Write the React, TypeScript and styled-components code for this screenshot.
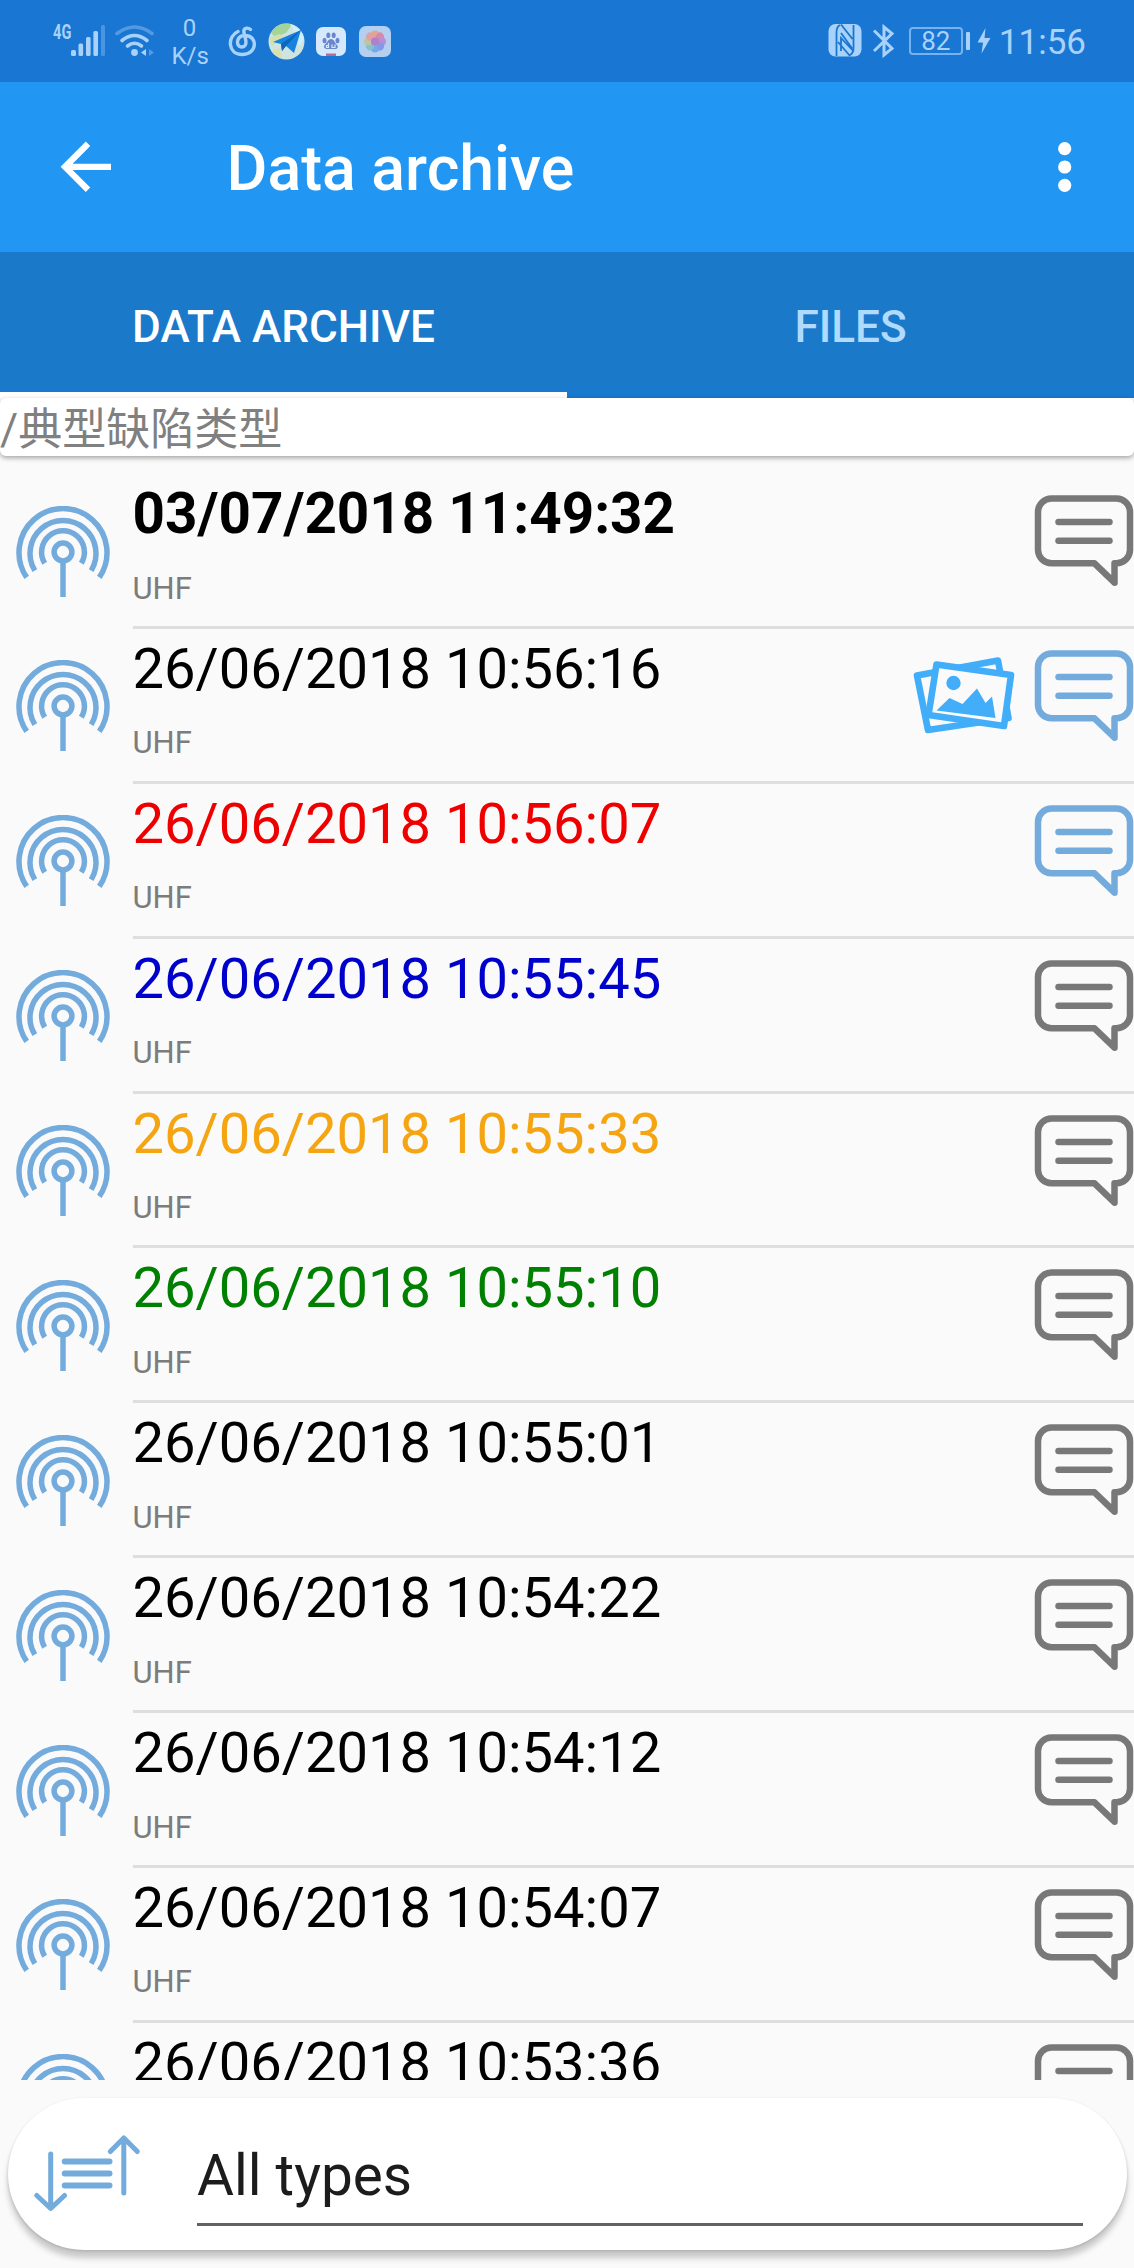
import React, { useState } from 'react'
import styled, { createGlobalStyle } from 'styled-components'

const GlobalStyle = createGlobalStyle`
  * {
    box-sizing: border-box;
  }
  body {
    margin: 0;
    background: #fafafa;
    font-family: Roboto, 'Noto Sans CJK SC', sans-serif;
  }
  svg {
    display: block;
    flex: none;
  }
`

const Screen = styled.div`
  width: 1134px;
  height: 2268px;
  display: flex;
  flex-direction: column;
  overflow: hidden;
  background: #fafafa;
`

const StatusBar = styled.div`
  height: 82px;
  flex: none;
  display: flex;
  justify-content: space-between;
  padding: 0 48px 0 53px;
  background: #1976d2;
  color: #a9d2fb;
`

const StatusGroup = styled.div`
  display: flex;
  align-items: flex-start;
`

const StatusItem = styled.div<{ $left?: number; $top: number }>`
  margin-left: ${({ $left }) => $left || 0}px;
  margin-top: ${({ $top }) => $top}px;
`

const Network = styled.span`
  display: block;
  width: 18px;
  font-size: 20px;
  line-height: 20px;
  font-weight: 700;
  transform: scaleX(0.73);
  transform-origin: left;
`

const Speed = styled.div`
  width: 36px;
  font-size: 24px;
  line-height: 27.5px;
  text-align: center;
`

const Battery = styled.div`
  width: 54px;
  height: 28px;
  border: 2px solid #75b3f0;
  border-radius: 4px;
  font-size: 26px;
  line-height: 25px;
  text-align: center;
`

const BatteryTip = styled.div`
  width: 4px;
  height: 18px;
  border-radius: 1px;
  background: #a9d2fb;
`

const Clock = styled.div`
  font-size: 35px;
  line-height: 40px;
`

const Toolbar = styled.header`
  height: 170px;
  flex: none;
  display: flex;
  align-items: center;
  padding: 0 31px 0 48px;
  background: #2196f3;
  color: #fff;
`

const Title = styled.h1`
  flex: 1;
  margin: 4px 0 0 103px;
  font-size: 62.6px;
  line-height: 72px;
  font-weight: 500;
`

const IconButton = styled.button`
  padding: 0;
  border: none;
  background: none;
  color: inherit;
  cursor: pointer;
`

const Tabs = styled.nav`
  height: 146px;
  flex: none;
  display: flex;
  background: linear-gradient(#1b79ca 0, #1b79ca 133px, #1779d0 140px, #1b79ca 146px);
`

const Tab = styled.button<{ $active: boolean }>`
  flex: 1;
  padding: 9px 0 0;
  border: none;
  border-bottom: 6px solid ${({ $active }) => ($active ? '#fff' : 'transparent')};
  background: none;
  color: ${({ $active }) => ($active ? '#fff' : '#b1daff')};
  font-family: inherit;
  font-size: 44.1px;
  line-height: 52px;
  font-weight: 500;
  cursor: pointer;
`

const PathCard = styled.div`
  height: 58px;
  flex: none;
  padding-top: 3px;
  border-radius: 6px;
  background: #fff;
  box-shadow: 0 2px 5px rgba(0, 0, 0, 0.35);
  color: #808080;
  font-size: 44px;
  line-height: 58px;
  white-space: nowrap;
`

const List = styled.div`
  height: 1623.7px;
  flex: none;
  padding-top: 18px;
  overflow: hidden;
`

const Row = styled.div`
  height: 154.88px;
  display: flex;
  padding-left: 16px;
`

const AntennaSlot = styled.div`
  width: 116.5px;
  flex: none;
  padding-top: 31.6px;
`

const RowBody = styled.div`
  flex: 1;
  display: flex;
  justify-content: space-between;
  border-bottom: 3px solid #dedede;
`

const Stamp = styled.div<{ $color?: string; $bold?: boolean }>`
  margin-top: 7px;
  color: ${({ $color }) => $color || '#000'};
  font-size: ${({ $bold }) => ($bold ? 56.6 : 56.1)}px;
  line-height: 66px;
  font-weight: ${({ $bold }) => ($bold ? 700 : 400)};
  white-space: nowrap;
`

const Kind = styled.div`
  margin-top: 22.5px;
  color: #7c7c7c;
  font-size: 31px;
  line-height: 37px;
`

const RowIcons = styled.div`
  display: flex;
  gap: 18px;
  padding-top: 20px;
`

const FilterCard = styled.div`
  height: 152px;
  flex: none;
  display: flex;
  margin: 18.3px 7px 0 8px;
  padding: 36px 44px 0 26px;
  border-radius: 76px;
  background: #fff;
  box-shadow: 0 8px 6px rgba(0, 0, 0, 0.2), 0 1px 3px rgba(0, 0, 0, 0.14);
`

const Select = styled.div`
  flex: 1;
  height: 92px;
  margin-left: 56px;
  padding-top: 5px;
  border-bottom: 3px solid #626262;
  color: #1c1c1c;
  font-size: 56.7px;
  line-height: 74px;
`

const SignalIcon = () => (
  <svg width="34" height="32" viewBox="0 0 34 32" fill="currentColor">
    <rect x="0" y="25" width="5" height="6" rx="1.5" />
    <rect x="7.5" y="18.5" width="4.6" height="12.5" rx="1.5" />
    <rect x="15" y="12" width="4.6" height="19" rx="1.5" />
    <rect x="22.4" y="6" width="4.6" height="25" rx="1.5" />
    <rect x="30" y="0" width="4" height="31" rx="1.5" opacity="0.35" />
  </svg>
)

const WifiIcon = () => (
  <svg width="40" height="32" viewBox="0 0 40 32" fill="none" stroke="currentColor" strokeWidth="3.6" strokeLinecap="round">
    <path d="M2 8.5Q19.5-4.5 37 8.5" opacity="0.4" />
    <path d="M7 15.5Q19.5 5.5 32 15.5" />
    <path d="M12.5 21Q19.5 15.5 26.5 21" />
    <circle cx="19.5" cy="27.5" r="3.4" fill="currentColor" stroke="none" />
    <path d="M31 24v7l-5-3.5z" fill="currentColor" stroke="none" />
    <path d="M34 24v7l5-3.5z" fill="currentColor" stroke="none" opacity="0.4" />
  </svg>
)

const MusicIcon = () => (
  <svg width="29" height="31" viewBox="0 0 29 31" fill="none" stroke="currentColor" strokeWidth="3.4" strokeLinecap="round">
    <path d="M10 5.5C-1 10-.5 28.5 14 28.5C30 28.5 30 9 16.5 9.5C8 10 7.5 20.5 13.5 21C18 21 18.5 17 17.5 13L16 7C15 2 19.5 1 22.5 3.5" />
  </svg>
)

const MapIcon = () => (
  <svg width="37" height="37" viewBox="0 0 37 37">
    <circle cx="18.5" cy="18.5" r="18" fill="#cfe3df" />
    <path d="M6 6A18 18 0 0 1 24 1.5L18 10L7 14L3 10z" fill="#a3d49a" />
    <path d="M1 15l10-4 5 3-12 9z" fill="#d6dfae" />
    <path d="M22 1q12 3 14 15l-5 8-4-14z" fill="#cdeefa" />
    <path d="M4 28l8-3 2 10q-6-2-10-7z" fill="#d9e0a9" />
    <path d="M5 19L33 7L26 30L18 23L14 28L13 21z" fill="#1583df" />
    <path d="M13 21L33 7L18 23L14 28z" fill="#0d66ba" />
  </svg>
)

const PawIcon = () => (
  <svg width="30" height="30" viewBox="0 0 30 30">
    <rect width="30" height="29" rx="7" fill="#d6e8fb" />
    <g fill="#6a86cf">
      <ellipse cx="8.5" cy="13.5" rx="2" ry="2.7" />
      <ellipse cx="12.3" cy="8.3" rx="2" ry="2.8" />
      <ellipse cx="17.7" cy="8.3" rx="2" ry="2.8" />
      <ellipse cx="21.5" cy="13.5" rx="2" ry="2.7" />
      <path d="M15 12c3 0 4 4 6 6c2 2 0 4.5-2.5 4h-7c-3.5 0-4.5-2.5-2.5-4.5C11 16 12 12 15 12z" />
    </g>
    <path d="M12.5 16v4.5h-2v-2h2M16 17.5v3h3v-3" fill="none" stroke="#d6e8fb" strokeWidth="1.2" />
    <rect x="10" y="26.5" width="10" height="2.5" fill="#b46d99" />
  </svg>
)

const petals = ['#e3a58f', '#d68aa8', '#b78fd8', '#8996e3', '#74a9e8', '#84c1cb', '#bcc6a5', '#e2a0a0']

const PhotosIcon = () => (
  <svg width="32" height="31" viewBox="0 0 32 31">
    <rect width="32" height="31" rx="7" fill="#b4d0f0" />
    {petals.map((color, i) => (
      <circle key={color} cx="16" cy="8.5" r="4" fill={color} transform={`rotate(${i * 45} 16 15.5)`} />
    ))}
    <circle cx="16" cy="15.5" r="4" fill="#b07fce" />
  </svg>
)

const NfcIcon = () => (
  <svg width="34" height="33" viewBox="0 0 34 33" fill="currentColor">
    <rect x="0.5" width="33" height="32.5" rx="7" />
    <path
      d="M12 1Q8.5 3 8.5 8V32M13 9L23.5 23.5V25L13 14V27M22 31Q25.5 29 25.5 24V1M13 .5L24.5 15M10 18L22 32"
      fill="none"
      stroke="#1976d2"
      strokeWidth="1.8"
    />
  </svg>
)

const BluetoothIcon = () => (
  <svg width="22" height="34" viewBox="0 0 22 34" fill="none" stroke="currentColor" strokeWidth="3">
    <path d="M1 6.5L19 24.5L11 31V3L19 9.5L1 27" />
  </svg>
)

const BoltIcon = () => (
  <svg width="14" height="26" viewBox="0 0 14 26" fill="currentColor">
    <path d="M8.5 0L.5 14.5H6L4.5 25.5L13.5 10H7.5z" />
  </svg>
)

const BackIcon = () => (
  <svg width="75.6" height="75.6" viewBox="0 0 24 24" fill="currentColor">
    <path d="M20 11H7.83l5.59-5.59L12 4l-8 8 8 8 1.41-1.41L7.83 13H20v-2z" />
  </svg>
)

const MoreIcon = () => (
  <svg width="76" height="76" viewBox="0 0 76 76" fill="currentColor">
    <circle cx="37.7" cy="19.7" r="6.6" />
    <circle cx="37.7" cy="38" r="6.6" />
    <circle cx="37.7" cy="56.3" r="6.6" />
  </svg>
)

const AntennaIcon = () => (
  <svg width="94" height="92" viewBox="0 0 94 92" fill="none" stroke="#74abdd" strokeWidth="5.5">
    <circle cx="47" cy="46" r="8.9" />
    <path d="M47 55V91" />
    <path d="M28.7 57.2A21.4 21.4 0 1 1 65.3 57.2" />
    <path d="M18.8 64.6A33 33 0 1 1 75.2 64.6" />
    <path d="M10.7 71.4A44 44 0 1 1 83.3 71.4" />
  </svg>
)

const CommentIcon = ({ active }: { active?: boolean }) => (
  <svg
    width="100"
    height="93"
    viewBox="0 0 100 93"
    fill="none"
    stroke={active ? '#74abdd' : '#787878'}
    strokeWidth="6.5"
    strokeLinecap="round"
    strokeLinejoin="round"
  >
    <path d="M17.5 4.5H82.5A13.5 13.5 0 0 1 96 18V56A13.5 13.5 0 0 1 82.5 69.3H80.5V88.7L60.5 69.3H17.5A13.5 13.5 0 0 1 4 56V18A13.5 13.5 0 0 1 17.5 4.5z" />
    <path d="M24.5 28H75.5M24.5 46.7H75.5" />
  </svg>
)

const PictureIcon = () => (
  <svg width="104" height="80" viewBox="0 0 104 80" fill="none" stroke="#42adf9" strokeWidth="6.6" strokeLinejoin="round">
    <path d="M5 20.5L86 5.5L96.5 63L16 75z" />
    <path d="M24.5 9.5L99 20L92 71L16.5 60z" fill="#fafafa" />
    <g fill="#42adf9" stroke="none">
      <circle cx="41.5" cy="28" r="7.2" />
      <path d="M24.5 55.5L37.5 43L50.5 49L65 33.5L73.5 48L80 41.5L83.5 63z" />
    </g>
  </svg>
)

const SortIcon = () => (
  <svg width="107" height="80" viewBox="0 0 107 80" fill="none" stroke="#74abdd" strokeLinecap="round" strokeLinejoin="round">
    <path d="M16.7 20V74M2.8 61.5L16.7 74.5L30.5 61.5" strokeWidth="5" />
    <path d="M30.7 27.5H75.5M30.7 39.5H75.5M30.7 51.5H75.5" strokeWidth="6" />
    <path d="M89.8 59V4M76.3 17.5L89.8 4L103.3 17.5" strokeWidth="5" />
  </svg>
)

interface IRecord {
  date: string
  color?: string
  bold?: boolean
  picture?: boolean
  commented?: boolean
}

const records: IRecord[] = [
  { date: '03/07/2018 11:49:32', bold: true },
  { date: '26/06/2018 10:56:16', picture: true, commented: true },
  { date: '26/06/2018 10:56:07', color: '#ee0000', commented: true },
  { date: '26/06/2018 10:55:45', color: '#0000cc' },
  { date: '26/06/2018 10:55:33', color: '#f5a511' },
  { date: '26/06/2018 10:55:10', color: '#008000' },
  { date: '26/06/2018 10:55:01' },
  { date: '26/06/2018 10:54:22' },
  { date: '26/06/2018 10:54:12' },
  { date: '26/06/2018 10:54:07' },
  { date: '26/06/2018 10:53:36' },
]

const PictureSlot = styled.div`
  padding-top: 6px;
`

const RecordRow: React.FC<{ record: IRecord }> = ({ record }) => (
  <Row>
    <AntennaSlot>
      <AntennaIcon />
    </AntennaSlot>
    <RowBody>
      <div>
        <Stamp $color={record.color} $bold={record.bold}>{record.date}</Stamp>
        <Kind>UHF</Kind>
      </div>
      <RowIcons>
        {record.picture && <PictureSlot><PictureIcon /></PictureSlot>}
        <CommentIcon active={record.commented} />
      </RowIcons>
    </RowBody>
  </Row>
)

const tabs = ['DATA ARCHIVE', 'FILES']

const App: React.FC = () => {
  const [active, setActive] = useState(0)

  return (
    <Screen>
      <GlobalStyle />
      <StatusBar>
        <StatusGroup>
          <StatusItem $top={22}><Network>4G</Network></StatusItem>
          <StatusItem $top={25}><SignalIcon /></StatusItem>
          <StatusItem $left={9.5} $top={25}><WifiIcon /></StatusItem>
          <StatusItem $left={17} $top={15}><Speed>0<br />K/s</Speed></StatusItem>
          <StatusItem $left={20} $top={26}><MusicIcon /></StatusItem>
          <StatusItem $left={11} $top={23}><MapIcon /></StatusItem>
          <StatusItem $left={11} $top={27}><PawIcon /></StatusItem>
          <StatusItem $left={13.5} $top={26}><PhotosIcon /></StatusItem>
        </StatusGroup>
        <StatusGroup>
          <StatusItem $top={24}><NfcIcon /></StatusItem>
          <StatusItem $left={11} $top={24}><BluetoothIcon /></StatusItem>
          <StatusItem $left={14} $top={27}><Battery>82</Battery></StatusItem>
          <StatusItem $left={3} $top={32}><BatteryTip /></StatusItem>
          <StatusItem $left={7} $top={28}><BoltIcon /></StatusItem>
          <StatusItem $left={8} $top={23}><Clock>11:56</Clock></StatusItem>
        </StatusGroup>
      </StatusBar>
      <Toolbar>
        <IconButton aria-label="Back"><BackIcon /></IconButton>
        <Title>Data archive</Title>
        <IconButton aria-label="More"><MoreIcon /></IconButton>
      </Toolbar>
      <Tabs>
        {tabs.map((tab, i) => (
          <Tab key={tab} $active={i === active} onClick={() => setActive(i)}>{tab}</Tab>
        ))}
      </Tabs>
      <PathCard>/典型缺陷类型</PathCard>
      <List>
        {records.map((record) => <RecordRow key={record.date} record={record} />)}
      </List>
      <FilterCard>
        <SortIcon />
        <Select>All types</Select>
      </FilterCard>
    </Screen>
  )
}

export default App
